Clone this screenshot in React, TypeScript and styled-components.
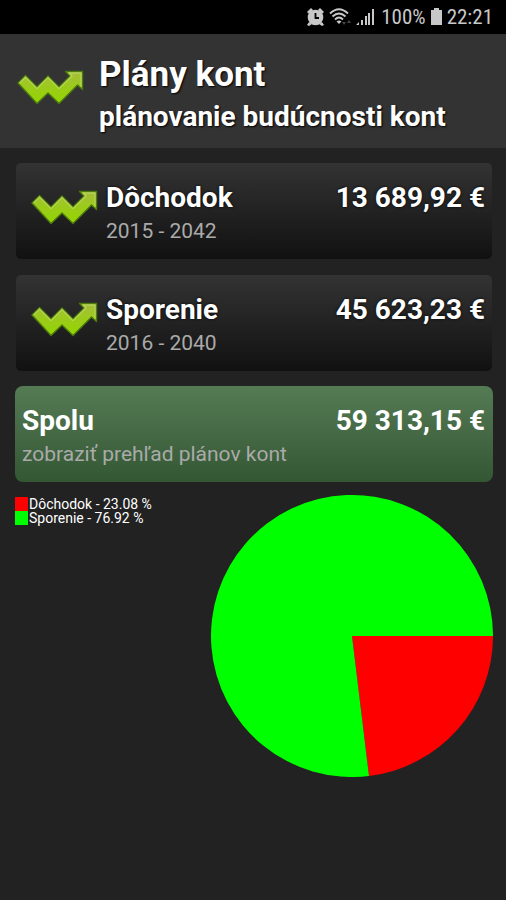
import React, { useId } from "react";
import styled, { createGlobalStyle } from "styled-components";

const GlobalStyle = createGlobalStyle`
  * { box-sizing: border-box; }
  html { background: #222; }
  body {
    margin: 0;
    background: #222;
    color: #fff;
    font-family: Roboto, "Noto Sans", sans-serif;
  }
`;

const Page = styled.div`
  min-height: 100vh;
  display: flex;
  flex-direction: column;
`;

const StatusBar = styled.div`
  height: 34px;
  padding: 0 13px;
  display: flex;
  align-items: center;
  justify-content: flex-end;
  gap: 4px;
  background: #000;
  color: #c8c8c8;
  font: 21px/34px "Liberation Sans Narrow", "Roboto Condensed", Roboto, sans-serif;
`;

const Header = styled.header`
  height: 114px;
  padding: 18px 16px 0;
  display: flex;
  gap: 15px;
  background: #333;
`;

const HeaderLogo = styled.div`
  padding-top: 17px;
`;

const Title = styled.h1`
  margin: 0;
  font-size: 35px;
  line-height: 45px;
  font-weight: 700;
  text-shadow: 1px 1px 2px #000;
`;

const Subtitle = styled.p`
  margin: 0;
  font-size: 28px;
  line-height: 40px;
  font-weight: 700;
  text-shadow: 1px 1px 2px #000;
`;

const Main = styled.main`
  padding: 15px 13px 15px 15px;
  display: flex;
  flex-direction: column;
`;

const PlanList = styled.div`
  padding: 0 1px;
  display: flex;
  flex-direction: column;
  gap: 16px;
`;

const Card = styled.button<{ $total?: boolean }>`
  width: 100%;
  min-height: 96px;
  margin: ${(p) => (p.$total ? "15px 0 0" : "0")};
  padding: ${(p) => (p.$total ? "18px 8px 12px 7px" : "18px 7px 12px 14px")};
  display: flex;
  align-items: flex-start;
  gap: 8px;
  border: 0;
  border-radius: ${(p) => (p.$total ? "8px" : "5px")};
  background: ${(p) =>
    p.$total
      ? "linear-gradient(#557b55, #335733)"
      : "linear-gradient(#333, #111)"};
  color: #fff;
  font-family: inherit;
  text-align: left;
  cursor: pointer;
`;

const CardLogo = styled.span`
  padding-top: 8px;
`;

const CardText = styled.span`
  flex: 1;
  display: flex;
  flex-direction: column;
`;

const CardLine = styled.span<{ $flat?: boolean }>`
  display: flex;
  justify-content: space-between;
  font-size: 28px;
  line-height: 34px;
  font-weight: 700;
  text-shadow: ${(p) => (p.$flat ? "none" : "0 0 3px #000")};
`;

const CardNote = styled.span`
  color: #aaa;
  font-size: 21px;
  line-height: 32px;
`;

const Chart = styled.section`
  padding: 13px 0 0;
  display: flex;
  justify-content: space-between;
  align-items: flex-start;
`;

const Legend = styled.ul`
  margin: 0;
  padding: 2px 0 0;
  list-style: none;
  font-size: 14px;
  line-height: 14px;
`;

const LegendItem = styled.li`
  display: flex;
  gap: 1px;
  white-space: nowrap;
`;

const Swatch = styled.span<{ $color: string }>`
  width: 13px;
  height: 14px;
  background: ${(p) => p.$color};
`;

const Pie = styled.svg`
  width: 59%;
  height: auto;
  display: block;
`;

const Drawing = styled.svg`
  display: block;
  flex: none;
`;

function Logo() {
  const id = useId();
  return (
    <Drawing width="68" height="38" viewBox="0 0 68 38" aria-hidden="true">
      <defs>
        <linearGradient id={id} x1="0" y1="0" x2="0" y2="1">
          <stop offset="0" stopColor="#a6bd3c" />
          <stop offset="0.5" stopColor="#9bcb1a" />
          <stop offset="1" stopColor="#92d600" />
        </linearGradient>
      </defs>
      <path
        d="M2 14 9.500 6.500 21 18 32 7 43 18 54 7 49.500 2.500H66.500V20.500L61.500 16 43 34.500 32 24 21 34.500Z"
        fill={`url(#${id})`}
        stroke="#4d7a0c"
        strokeWidth="1.400"
        strokeLinejoin="round"
      />
      <path
        d="M3.500 14 9.500 8 21 19.500 32 8.500 43 19.500 56 7 53 4H65V18"
        fill="none"
        stroke="#c4e46c"
        strokeOpacity="0.6"
        strokeWidth="1.300"
      />
    </Drawing>
  );
}

function AlarmIcon() {
  return (
    <Drawing width="19" height="20" viewBox="0 0 19 20" aria-label="Budík">
      <path d="M1 5 5 1 7 3 3 7ZM18 5 14 1 12 3 16 7ZM3 15 1 18 3 19 6 17ZM16 15 18 18 16 19 13 17Z" fill="#c8c8c8" />
      <circle cx="9.500" cy="10.500" r="7.800" fill="#c8c8c8" />
      <path d="M9.500 6V11H13" fill="none" stroke="#000" strokeWidth="1.800" />
    </Drawing>
  );
}

function WifiIcon() {
  return (
    <Drawing width="23" height="20" viewBox="0 0 23 20" aria-label="Wi-Fi">
      <g fill="none" stroke="#c8c8c8" strokeWidth="1.900">
        <path d="M1 6.500Q10 -2 19 6.500" />
        <path d="M3.500 9.500Q10 3.500 16.500 9.500" />
        <path d="M6 12.500Q10 8.500 14 12.500" />
      </g>
      <path d="M7.500 14.500Q10 12.500 12.500 14.500L10 17Z" fill="#c8c8c8" />
      <path d="M13 15H17L15 18ZM18 16 20 13 22 16Z" fill="#444" />
    </Drawing>
  );
}

function SignalIcon() {
  return (
    <Drawing width="21" height="18" viewBox="0 0 21 18" aria-label="Signál">
      <path d="M0 17 3 14V17ZM5 12H7V17H5ZM9 8H11V17H9ZM12 5H14V17H12ZM16 1H18V17H16Z" fill="#c8c8c8" />
    </Drawing>
  );
}

function BatteryIcon() {
  return (
    <Drawing width="13" height="18" viewBox="0 0 13 18" aria-label="Batéria">
      <path d="M4 0H9V2H12V17H1V2H4Z" fill="#c8c8c8" />
    </Drawing>
  );
}

const plans = [
  { name: "Dôchodok", years: "2015 - 2042", amount: "13 689,92 €", share: 23.08, color: "#f00" },
  { name: "Sporenie", years: "2016 - 2040", amount: "45 623,23 €", share: 76.92, color: "#0f0" },
];

function PieChart() {
  let start = 0;
  return (
    <Pie viewBox="-141 -141 282 282" role="img" aria-label="Podiel plánov kont">
      {plans.map((p) => {
        const a = start;
        const b = a + (p.share / 100) * Math.PI * 2;
        start = b;
        const large = b - a > Math.PI ? 1 : 0;
        return (
          <path
            key={p.name}
            fill={p.color}
            d={`M0 0L${141 * Math.cos(a)} ${141 * Math.sin(a)}A141 141 0 ${large} 1 ${141 * Math.cos(b)} ${141 * Math.sin(b)}Z`}
          />
        );
      })}
    </Pie>
  );
}

export default function App() {
  return (
    <Page>
      <GlobalStyle />
      <StatusBar>
        <AlarmIcon />
        <WifiIcon />
        <SignalIcon />
        <span>100%</span>
        <BatteryIcon />
        <span>22:21</span>
      </StatusBar>
      <Header>
        <HeaderLogo>
          <Logo />
        </HeaderLogo>
        <div>
          <Title>Plány kont</Title>
          <Subtitle>plánovanie budúcnosti kont</Subtitle>
        </div>
      </Header>
      <Main>
        <PlanList>
          {plans.map((p) => (
            <Card key={p.name} type="button">
              <CardLogo>
                <Logo />
              </CardLogo>
              <CardText>
                <CardLine>
                  <span>{p.name}</span>
                  <span>{p.amount}</span>
                </CardLine>
                <CardNote>{p.years}</CardNote>
              </CardText>
            </Card>
          ))}
        </PlanList>
        <Card type="button" $total>
          <CardText>
            <CardLine $flat>
              <span>Spolu</span>
              <span>59 313,15 €</span>
            </CardLine>
            <CardNote>zobraziť prehľad plánov kont</CardNote>
          </CardText>
        </Card>
        <Chart>
          <Legend>
            {plans.map((p) => (
              <LegendItem key={p.name}>
                <Swatch $color={p.color} />
                <span>{`${p.name} - ${p.share} %`}</span>
              </LegendItem>
            ))}
          </Legend>
          <PieChart />
        </Chart>
      </Main>
    </Page>
  );
}
